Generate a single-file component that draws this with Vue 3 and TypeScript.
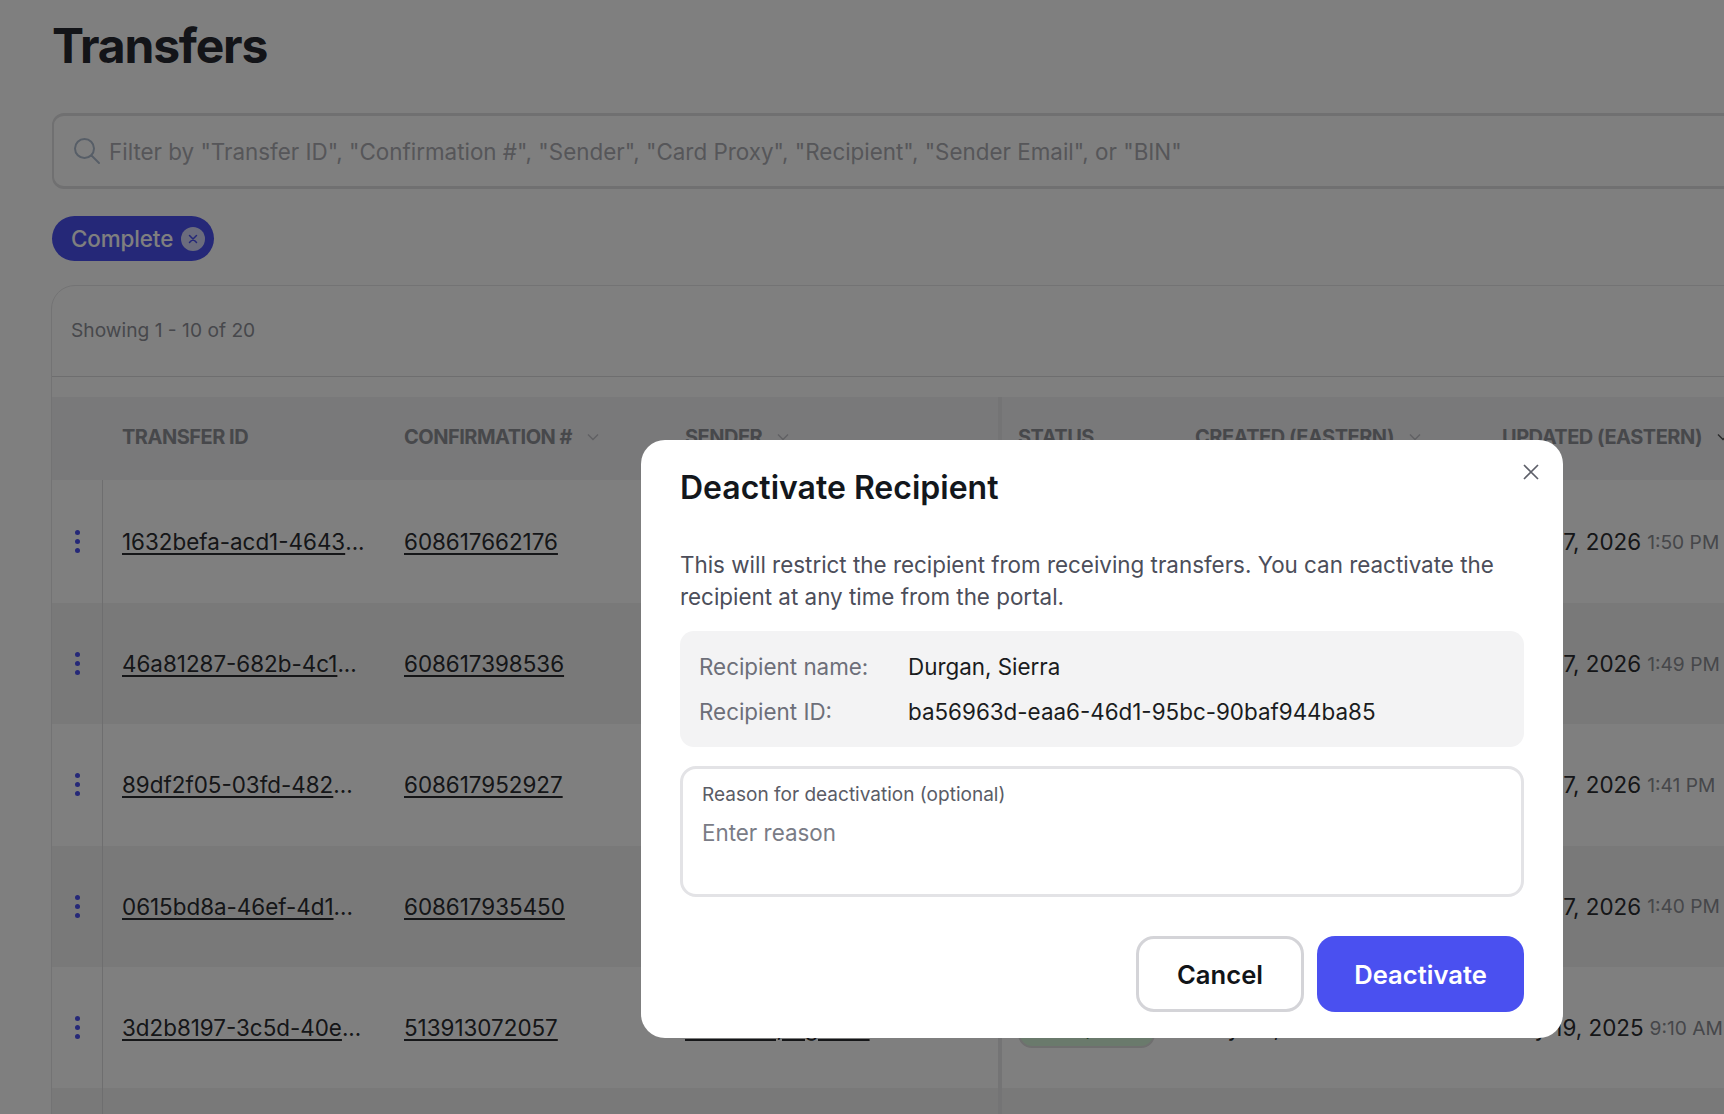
<script setup lang="ts">
interface Row { id: string; conf: string; sender: string; created: string; createdTime: string; date: string; time: string; first?: boolean }
const rows: Row[] = [
  { id: '1632befa-acd1-4643', conf: '608617662176', sender: 'Kautzer, Milan', created: 'Mar 27, 2026', createdTime: '1:50 PM', date: 'Mar 27, 2026', time: '1:50 PM', first: true },
  { id: '46a81287-682b-4c1', conf: '608617398536', sender: 'Hayes, Jordan', created: 'Mar 27, 2026', createdTime: '1:49 PM', date: 'Mar 27, 2026', time: '1:49 PM' },
  { id: '89df2f05-03fd-482', conf: '608617952927', sender: 'Bauch, Rowan', created: 'Mar 27, 2026', createdTime: '1:41 PM', date: 'Mar 27, 2026', time: '1:41 PM' },
  { id: '0615bd8a-46ef-4d1', conf: '608617935450', sender: 'Walsh, Quinn', created: 'Mar 27, 2026', createdTime: '1:40 PM', date: 'Mar 27, 2026', time: '1:40 PM' },
  { id: '3d2b8197-3c5d-40e', conf: '513913072057', sender: 'Kuhlman, Agustin', created: 'May 20, 2025', createdTime: '9:10 AM', date: 'May 19, 2025', time: '9:10 AM' },
]
</script>

<template>
  <div class="page">
    <h1 class="title">Transfers</h1>
    <div class="search">
      <svg class="search-icon" width="28" height="28" viewBox="0 0 28 28" fill="none" stroke="#aebccf" stroke-width="2" stroke-linecap="round">
        <circle cx="11.5" cy="11.5" r="9.5" />
        <path d="M18.5 18.5 L26 26" />
      </svg>
      <span>Filter by "Transfer ID", "Confirmation #", "Sender", "Card Proxy", "Recipient", "Sender Email", or "BIN"</span>
    </div>
    <div class="chips">
      <span class="chip">Complete
        <span class="chip-x">
          <svg width="10" height="10" viewBox="0 0 10 10" fill="none" stroke="#4a50f0" stroke-width="1.5" stroke-linecap="round"><path d="M1.5 1.5l7 7M8.5 1.5l-7 7" /></svg>
        </span>
      </span>
    </div>
    <section class="card">
      <div class="card-top">Showing 1 - 10 of 20</div>
      <div class="table">
        <div class="row head">
          <div class="c-menu"></div>
          <div class="c-id">TRANSFER ID</div>
          <div class="c-conf">CONFIRMATION #<svg class="chev" width="14" height="8" viewBox="0 0 14 8" fill="none" stroke="#c0c0c6" stroke-width="1.4"><path d="M2 1.5l5 5 5-5" /></svg></div>
          <div class="c-sender">SENDER<svg class="chev" width="14" height="8" viewBox="0 0 14 8" fill="none" stroke="#c0c0c6" stroke-width="1.4"><path d="M2 1.5l5 5 5-5" /></svg></div>
          <div class="c-status">STATUS</div>
          <div class="c-created">CREATED (EASTERN)<svg class="chev" width="14" height="8" viewBox="0 0 14 8" fill="none" stroke="#c0c0c6" stroke-width="1.4"><path d="M2 1.5l5 5 5-5" /></svg></div>
          <div class="c-updated">UPDATED (EASTERN)<svg class="chev" width="14" height="8" viewBox="0 0 14 8" fill="none" stroke="#555" stroke-width="1.4"><path d="M2 1.5l5 5 5-5" /></svg></div>
        </div>
        <div v-for="(r, i) in rows" :key="r.id" class="row body" :class="{ alt: i % 2 === 1, first: r.first }">
          <div class="c-menu"><span class="dots"><i></i><i></i><i></i></span></div>
          <div class="c-id"><a>{{ r.id }}</a>...</div>
          <div class="c-conf"><a>{{ r.conf }}</a></div>
          <div class="c-sender"><a>{{ r.sender }}</a></div>
          <div class="c-status"><span class="badge">Complete</span></div>
          <div class="c-created">{{ r.created }} <small>{{ r.createdTime }}</small></div>
          <div class="c-updated">{{ r.date }} <small>{{ r.time }}</small></div>
        </div>
        <div class="row body alt">
          <div class="c-menu"></div><div class="c-id"></div><div class="c-conf"></div><div class="c-sender"></div><div class="c-status"></div><div class="c-created"></div><div class="c-updated"></div>
        </div>
      </div>
    </section>

    <div class="backdrop"></div>
    <div class="modal" role="dialog">
      <h2>Deactivate Recipient</h2>
      <button class="close" aria-label="Close">
        <svg width="16" height="16" viewBox="0 0 16 16" fill="none" stroke="#5d5f69" stroke-width="1.7"><path d="M1 1l14 14M15 1L1 15" /></svg>
      </button>
      <p class="desc">This will restrict the recipient from receiving transfers. You can reactivate the recipient at any time from the portal.</p>
      <div class="info">
        <div class="info-row"><span class="k">Recipient name:</span><span class="v">Durgan, Sierra</span></div>
        <div class="info-row"><span class="k">Recipient ID:</span><span class="v">ba56963d-eaa6-46d1-95bc-90baf944ba85</span></div>
      </div>
      <div class="field">
        <label>Reason for deactivation (optional)</label>
        <div class="placeholder">Enter reason</div>
      </div>
      <div class="actions">
        <button class="btn cancel">Cancel</button>
        <button class="btn primary">Deactivate</button>
      </div>
    </div>
  </div>
</template>

<style>
html, body { margin: 0; background: #fff; overflow: hidden; }
</style>

<style scoped>
.page {
  position: relative;
  width: 1724px;
  height: 1114px;
  overflow: hidden;
  box-sizing: border-box;
  padding: 18px 0 0 52px;
  background: #fff;
  font-family: Inter, "Liberation Sans", sans-serif;
  color: #111418;
}
.title {
  margin: 0;
  font-size: 48px;
  line-height: 56px;
  font-weight: 700;
  letter-spacing: -1.2px;
  color: #262830;
}
.search {
  margin-top: 39px;
  width: 1800px;
  height: 76px;
  box-sizing: border-box;
  border: 3px solid #e0e0e2;
  border-left-width: 2px;
  border-radius: 12px;
  display: flex;
  align-items: center;
  gap: 8px;
  padding: 0 0 0 19px;
  font-size: 22.4px;
  color: #acadb3;
}
.search-icon { flex: none; }
.chips { margin-top: 27px; display: flex; }
.chip {
  height: 45px;
  box-sizing: border-box;
  background: #4a50f0;
  color: #fff;
  border-radius: 23px;
  display: inline-flex;
  align-items: center;
  gap: 8px;
  padding: 0 9px 0 19px;
  font-size: 22.4px;
  font-weight: 500;
  letter-spacing: -0.1px;
}
.chip-x {
  width: 24px;
  height: 24px;
  border-radius: 50%;
  background: #d6d9fb;
  display: flex;
  align-items: center;
  justify-content: center;
}
.card {
  margin-top: 24px;
  margin-left: -1px;
  width: 1800px;
  border: 1px solid #e6e6e8;
  border-radius: 24px 0 0 0;
}
.card-top {
  height: 91px;
  box-sizing: border-box;
  display: flex;
  align-items: center;
  padding: 0 0 2px 19px;
  font-size: 19.2px;
  color: #8e9098;
  border-bottom: 1px solid #dcdcdf;
}
.table { margin-top: 20px; }
.row { display: grid; grid-template-columns: 51px 282px 281px 336px 174px 307px 400px; }
.row > div { display: flex; align-items: center; box-sizing: border-box; padding-left: 19px; white-space: nowrap; }
.head { height: 83px; background: #f2f2f4; font-size: 20px; font-weight: 700; letter-spacing: -0.5px; color: #8e9096; }
.head > div { padding-bottom: 3px; }
.body { height: 121.3px; font-size: 22.4px; color: #2a2c30; background: #fff; }
.body.first { height: 123px; }
.body.alt { background: #f3f3f3; }
.row > .c-menu { padding: 0; justify-content: center; border-right: 1px solid #dcdcdf; }
.head > .c-menu { border-right: 0; }
.row > .c-sender { border-right: 4px solid #e8e8ea; }
.row > .c-status { padding-left: 16px; }
a { text-decoration: underline; text-underline-offset: 3px; color: inherit; }
.chev { margin-left: 14px; flex: none; }
.dots { display: flex; flex-direction: column; gap: 4px; }
.dots i { display: block; width: 5px; height: 5px; border-radius: 50%; background: #4a50f0; }
.badge {
  width: 137px;
  height: 40px;
  box-sizing: border-box;
  background: #d4f4d8;
  border: 2px solid #dedede;
  border-radius: 14px;
  display: flex;
  align-items: center;
  justify-content: center;
  font-size: 19.2px;
  color: #1f5c33;
}
small { font-size: 19.2px; color: #8c8e94; margin-left: 6px; }
.backdrop { position: absolute; inset: 0; background: rgba(0, 0, 0, 0.5); }
.modal {
  position: absolute;
  left: 641px;
  top: 440px;
  width: 922px;
  height: 598px;
  box-sizing: border-box;
  padding: 26px 39px 0;
  background: #fff;
  border-radius: 24px;
  display: flex;
  flex-direction: column;
}
.modal h2 { margin: 0; font-size: 32px; line-height: 44px; font-weight: 600; color: #13171c; }
.close { position: absolute; top: 24px; right: 24px; background: none; border: 0; padding: 0; width: 16px; height: 16px; display: flex; }
.desc { margin: 39px 0 0; font-size: 22.4px; line-height: 32px; color: #4c4e5a; }
.info { margin-top: 18px; background: #f3f3f4; border-radius: 14px; padding: 19px 19px 19px; display: flex; flex-direction: column; gap: 12px; font-size: 22.4px; line-height: 33px; }
.info-row { display: flex; }
.k { width: 209px; color: #6d6f79; flex: none; }
.v { color: #1a1c20; }
.field { margin-top: 19px; height: 131px; box-sizing: border-box; border: 3px solid #e3e3e6; border-radius: 16px; padding: 12px 19px; }
.field label { display: block; font-size: 19.05px; line-height: 28px; color: #5a5c66; }
.placeholder { margin-top: 8px; font-size: 22.4px; line-height: 32px; color: #7a7c86; }
.actions { margin-top: 39px; display: flex; justify-content: flex-end; gap: 13px; }
.btn { height: 76px; border-radius: 18px; font-family: inherit; font-size: 25.6px; font-weight: 600; box-sizing: border-box; }
.cancel { width: 168px; background: #fff; border: 3px solid #d4d4d8; color: #111418; }
.primary { width: 207px; background: #4a50f0; border: 0; color: #fff; }
</style>
